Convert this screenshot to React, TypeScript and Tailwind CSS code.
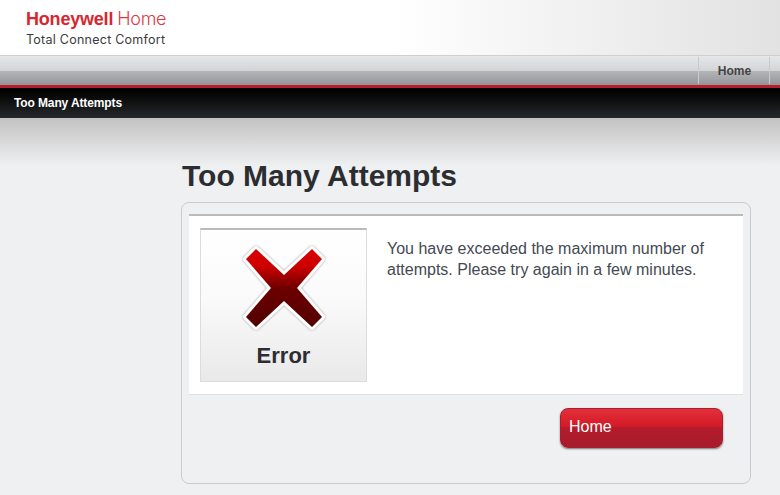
export default function App() {
  return (
    <div className="w-[780px] h-[495px] overflow-hidden bg-[#eff0f2] font-['Liberation_Sans',Arial,sans-serif] flex flex-col">
      <header className="h-[56px] shrink-0 border-b border-[#cfcfcf] bg-[linear-gradient(90deg,#ffffff_0%,#ffffff_50%,#e2e2e2_100%)] pl-[26px] pt-[9px]">
        <div className="flex items-baseline h-[20px] leading-[20px] text-[#d9252f]">
          <span className="font-['Liberation_Sans',sans-serif] font-bold text-[18px] tracking-[-0.2px]">Honeywell</span>
          <span className="font-['Inter',sans-serif] font-light text-[18px] ml-[4px] tracking-[-0.3px] text-[#dc3a43]">Home</span>
        </div>
        <div className="font-['Inter',sans-serif] text-[12.5px] leading-[16px] mt-[3px] text-[#3c3c3c] tracking-[0.25px]">Total Connect Comfort</div>
      </header>
      <nav className="h-[29px] shrink-0 flex justify-end bg-[linear-gradient(180deg,#e6e7e9_0%,#d3d4d6_50%,#b4b5b7_52%,#949598_100%)]">
        <div className="w-[72px] mr-[10px] my-[1px] border-x border-[#c9cacc] flex items-center justify-center pl-[1px] text-[12px] font-bold text-[#444]">Home</div>
      </nav>
      <div className="h-[3px] shrink-0 bg-[#b5202e]"></div>
      <div className="h-[30px] shrink-0 flex items-center pl-[14px] text-[12px] tracking-[-0.12px] font-bold text-white bg-[linear-gradient(180deg,#000000_0%,#0a0a0a_30%,#25282b_100%)]">Too Many Attempts</div>
      <main className="flex-1 flex flex-col pl-[181px] pr-[29px] bg-[linear-gradient(180deg,#c2c2c2_0px,#eff0f2_48px)]">
        <h1 className="h-[84px] pt-[41px] pl-[1px] text-[30px] leading-[34px] font-bold text-[#2b2d30]">Too Many Attempts</h1>
        <section className="h-[282px] border border-[#c9cbce] rounded-[8px] bg-[#eef0f2] px-[7px] pt-[11px]">
          <div className="h-[181px] bg-white border-t-2 border-[#b9babc] border-b border-b-[#dfe0e3] flex pl-[11px] pt-[12px]">
            <div className="w-[167px] h-[154px] border border-[#dcdcdc] border-t-2 border-t-[#b9bac0] bg-[linear-gradient(180deg,#ffffff_0%,#fafafa_45%,#e9e9e9_100%)] flex flex-col items-center">
              <svg width="86" height="86" viewBox="0 0 86 86" className="mt-[15px] ml-[1px]">
                <defs>
                  <linearGradient id="xg" x1="0" y1="0" x2="0" y2="1">
                    <stop offset="0" stopColor="#d90000" />
                    <stop offset="0.22" stopColor="#cf0000" />
                    <stop offset="0.5" stopColor="#6d0000" />
                    <stop offset="1" stopColor="#520000" />
                  </linearGradient>
                </defs>
                <path d="M15 4 L43 30 L71 4 L81 14 L56 43 L81 72 L71 82 L43 56 L15 82 L5 72 L30 43 L5 14 Z" fill="url(#xg)" stroke="#ffffff" strokeWidth="6" strokeLinejoin="round" paintOrder="stroke" style={{ filter: "drop-shadow(0 0 1px #999)" }} />
              </svg>
              <div className="text-[22px] leading-[26px] font-bold text-[#2b2d30] mt-[12px]">Error</div>
            </div>
            <p className="w-[340px] ml-[20px] mt-[10px] text-[16px] leading-[21px] text-[#444a52]">You have exceeded the maximum number of attempts. Please try again in a few minutes.</p>
          </div>
          <div className="flex pl-[371px] pt-[13px]">
            <button className="w-[163px] h-[40px] rounded-[8px] border border-[#a8202e] pl-[8px] pb-[3px] text-left text-[16px] text-white shadow-[0_1px_2px_rgba(0,0,0,0.5)] bg-[linear-gradient(180deg,#e2303a_0%,#d41a26_45%,#b31c2c_50%,#a81c2c_100%)]">Home</button>
          </div>
        </section>
      </main>
    </div>
  );
}
